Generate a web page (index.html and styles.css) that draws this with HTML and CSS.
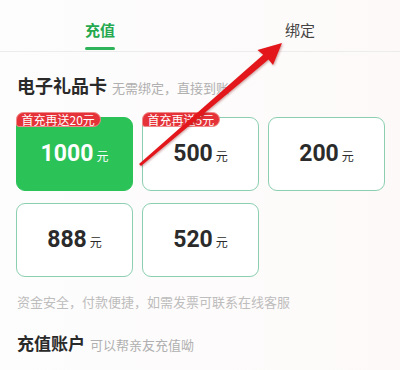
FILE: index.html
```html
<!DOCTYPE html>
<html lang="zh">
<head>
<meta charset="utf-8">
<link rel="stylesheet" href="styles.css">
</head>
<body>
<div class="page">
  <div class="tabs">
    <div class="tab active">充值<span class="bar"></span></div>
    <div class="tab">绑定</div>
  </div>
  <div class="section-title"><span class="t">电子礼品卡</span><span class="s">无需绑定，直接到账</span></div>
  <div class="cards">
    <div class="card selected"><span class="badge">首充再送20元</span><span class="num">1000</span><span class="unit">元</span></div>
    <div class="card"><span class="badge">首充再送5元</span><span class="num">500</span><span class="unit">元</span></div>
    <div class="card"><span class="num">200</span><span class="unit">元</span></div>
    <div class="card"><span class="num">888</span><span class="unit">元</span></div>
    <div class="card"><span class="num">520</span><span class="unit">元</span></div>
  </div>
  <div class="note">资金安全，付款便捷，如需发票可联系在线客服</div>
  <div class="section-title acct"><span class="t">充值账户</span><span class="s">可以帮亲友充值呦</span></div>
  <svg class="arrow" width="400" height="370" viewBox="0 0 400 370">
    <polygon points="139,164 141,166 268.5,59.5 273,65 282,43 257.5,50 263.2,54.8" fill="#e3171b"/>
  </svg>
</div>
</body>
</html>
```
FILE: styles.css
```css
* { box-sizing: border-box; margin: 0; padding: 0; }
body {
  margin: 0;
  width: 400px;
  height: 370px;
  overflow: hidden;
  background: #fff;
  font-family: "Noto Sans CJK SC", "Noto Sans", sans-serif;
}
.page {
  position: relative;
  width: 400px;
  height: 370px;
  overflow: hidden;
  background: linear-gradient(90deg, #fdfdfd 0%, #fdf9f9 100%);
}
.tabs {
  display: flex;
  height: 52px;
  border-bottom: 1px solid #ececec;
}
.tab {
  position: relative;
  flex: 1;
  text-align: center;
  font-size: 15px;
  line-height: 20px;
  padding-top: 20px;
  color: #444;
}
.tab.active {
  color: #25a94f;
  font-weight: bold;
}
.tab .bar {
  position: absolute;
  left: 85px;
  width: 30px;
  top: 47px;
  height: 3px;
  border-radius: 2px;
  background: #2fb35a;
}
.section-title {
  display: flex;
  align-items: baseline;
  padding: 20px 0 0 17px;
  height: 61px;
}
.section-title .t {
  font-size: 18px;
  font-weight: bold;
  color: #2a2a2a;
}
.section-title .s {
  font-size: 13px;
  color: #b0b0b0;
  margin-left: 5px;
}
.cards {
  display: grid;
  grid-template-columns: repeat(3, 117px);
  grid-auto-rows: 74px;
  column-gap: 9px;
  row-gap: 12px;
  padding: 4px 0 0 16px;
}
.card {
  position: relative;
  display: flex;
  align-items: baseline;
  justify-content: center;
  padding-top: 22px;
  border: 1.5px solid #8ccfb0;
  border-radius: 9px;
  background: #fff;
  color: #2b2b2b;
}
.card.selected {
  background: #2bc258;
  border-color: #2bc258;
  color: #fff;
}
.num {
  font-family: Roboto, "Liberation Sans", sans-serif;
  font-weight: bold;
  font-size: 23px;
  line-height: 28px;
}
.unit {
  font-size: 12px;
  margin-left: 3px;
}
.badge {
  position: absolute;
  left: -1.5px;
  top: -6px;
  height: 15px;
  padding: 0 5px;
  background: #e53238;
  border: 1px solid #f08a8a;
  border-radius: 8px 8px 8px 3px;
  color: #fff;
  font-size: 12px;
  line-height: 13px;
  white-space: nowrap;
}
.note {
  padding: 15px 0 0 17px;
  font-size: 13px;
  color: #bdbdbd;
  height: 53px;
}
.section-title.acct {
  padding-top: 0;
  height: auto;
}
.section-title.acct .t {
  font-size: 17px;
}
.arrow {
  position: absolute;
  left: 0;
  top: 0;
  pointer-events: none;
  filter: drop-shadow(1px 1px 1px rgba(120,0,0,0.35));
}
```
